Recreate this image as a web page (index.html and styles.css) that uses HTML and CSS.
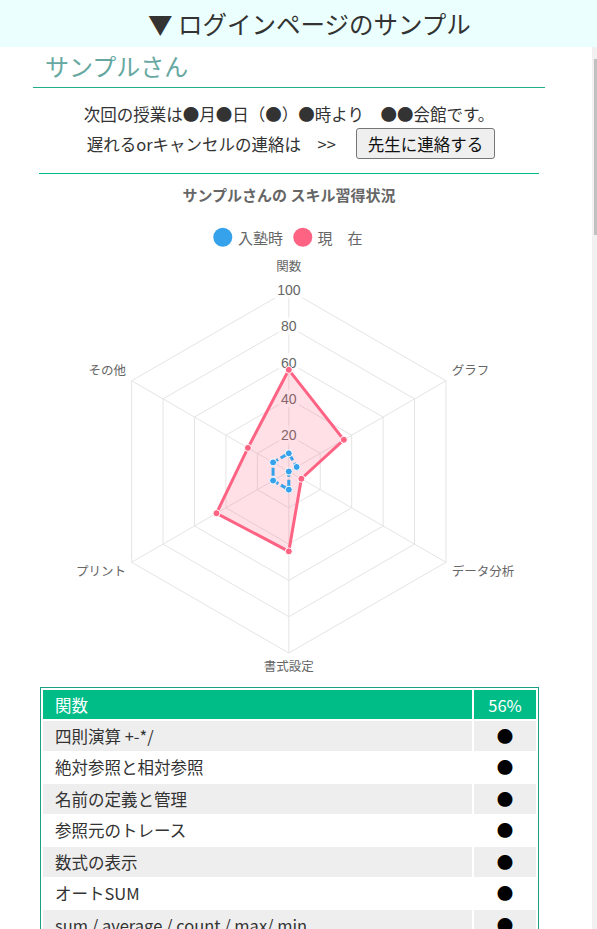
FILE: index.html
```html
<!DOCTYPE html>
<html lang="ja">
<head>
<meta charset="utf-8">
<title>ログインページのサンプル</title>
<link rel="stylesheet" href="styles.css">
</head>
<body>
<header class="topbar">▼ ログインページのサンプル</header>
<div class="page">
  <div class="content">
    <main class="main">
      <h2 class="user-name">サンプルさん</h2>
      <div class="info-line">次回の授業は●月●日（●）●時より　●●会館です。</div>
      <div class="info-row">
        <span>遅れるorキャンセルの連絡は　&gt;&gt;</span>
        <button class="contact-btn" type="button">先生に連絡する</button>
      </div>
      <hr class="sep">
      <svg class="chart" viewBox="29 174 520 510" width="520" height="510" xmlns="http://www.w3.org/2000/svg">
        <text x="289" y="194" class="c-title">サンプルさんの スキル習得状況</text>
        <circle cx="222.8" cy="237.3" r="9.5" fill="#36a2eb"/>
        <text x="238" y="237.3" class="c-legend">入塾時</text>
        <circle cx="302.8" cy="237.3" r="9.5" fill="#ff6384"/>
        <text x="317.5" y="237.3" class="c-legend">現　在</text>
        <g transform="translate(288.8 471.5)">
          <g class="grid">
            <polygon points="0,-36.3 31.44,-18.15 31.44,18.15 0,36.3 -31.44,18.15 -31.44,-18.15"/>
            <polygon points="0,-72.6 62.87,-36.3 62.87,36.3 0,72.6 -62.87,36.3 -62.87,-36.3"/>
            <polygon points="0,-108.9 94.31,-54.45 94.31,54.45 0,108.9 -94.31,54.45 -94.31,-54.45"/>
            <polygon points="0,-145.2 125.74,-72.6 125.74,72.6 0,145.2 -125.74,72.6 -125.74,-72.6"/>
            <polygon points="0,-181.5 157.18,-90.75 157.18,90.75 0,181.5 -157.18,90.75 -157.18,-90.75"/>
            <line x1="0" y1="0" x2="0" y2="-181.5"/>
            <line x1="0" y1="0" x2="157.18" y2="-90.75"/>
            <line x1="0" y1="0" x2="157.18" y2="90.75"/>
            <line x1="0" y1="0" x2="0" y2="181.5"/>
            <line x1="0" y1="0" x2="-157.18" y2="90.75"/>
            <line x1="0" y1="0" x2="-157.18" y2="-90.75"/>
          </g>
          <g class="tick-bg">
            <rect x="-14" y="-191" width="28" height="18"/>
            <rect x="-10" y="-154.7" width="20" height="18"/>
            <rect x="-10" y="-118.4" width="20" height="18"/>
            <rect x="-10" y="-82.1" width="20" height="18"/>
            <rect x="-10" y="-45.8" width="20" height="18"/>
          </g>
          <g class="ticks">
            <text x="0" y="-181.5">100</text>
            <text x="0" y="-145.2">80</text>
            <text x="0" y="-108.9">60</text>
            <text x="0" y="-72.6">40</text>
            <text x="0" y="-36.3">20</text>
          </g>
          <g class="plabels">
            <text x="0" y="-206.5" text-anchor="middle">関数</text>
            <text x="162.9" y="-102.5" text-anchor="start">グラフ</text>
            <text x="162.9" y="98.5" text-anchor="start">データ分析</text>
            <text x="0" y="193.5" text-anchor="middle">書式設定</text>
            <text x="-162.8" y="98.5" text-anchor="end">プリント</text>
            <text x="-162.8" y="-102.5" text-anchor="end">その他</text>
          </g>
          <polygon class="ds-now" points="0,-101.64 55.02,-31.76 12.57,7.26 0,79.86 -72.3,41.75 -40.87,-23.6"/>
          <polygon class="ds-start" points="0,-18.15 7.86,-4.54 0,0 0,18.15 -15.72,9.08 -15.72,-9.08"/>
          <g class="pt-now">
            <circle cx="0" cy="-101.64" r="3.5"/>
            <circle cx="55.02" cy="-31.76" r="3.5"/>
            <circle cx="12.57" cy="7.26" r="3.5"/>
            <circle cx="0" cy="79.86" r="3.5"/>
            <circle cx="-72.3" cy="41.75" r="3.5"/>
            <circle cx="-40.87" cy="-23.6" r="3.5"/>
          </g>
          <g class="pt-start">
            <circle cx="0" cy="-18.15" r="3.5"/>
            <circle cx="7.86" cy="-4.54" r="3.5"/>
            <circle cx="0" cy="0" r="3.5"/>
            <circle cx="0" cy="18.15" r="3.5"/>
            <circle cx="-15.72" cy="9.08" r="3.5"/>
            <circle cx="-15.72" cy="-9.08" r="3.5"/>
          </g>
        </g>
      </svg>
      <table class="skills">
        <thead>
          <tr><th class="c-name">関数</th><th class="c-val">56%</th></tr>
        </thead>
        <tbody>
          <tr><td class="c-name">四則演算 +-*/</td><td class="c-val">●</td></tr>
          <tr><td class="c-name">絶対参照と相対参照</td><td class="c-val">●</td></tr>
          <tr><td class="c-name">名前の定義と管理</td><td class="c-val">●</td></tr>
          <tr><td class="c-name">参照元のトレース</td><td class="c-val">●</td></tr>
          <tr><td class="c-name">数式の表示</td><td class="c-val">●</td></tr>
          <tr><td class="c-name">オートSUM</td><td class="c-val">●</td></tr>
          <tr><td class="c-name">sum / average / count / max/ min</td><td class="c-val">●</td></tr>
        </tbody>
      </table>
    </main>
  </div>
  <div class="scrollbar"><div class="thumb"></div></div>
</div>
</body>
</html>
```

FILE: styles.css
```css
html, body {
  margin: 0;
  padding: 0;
}
body {
  width: 597px;
  height: 929px;
  overflow: hidden;
  font-family: "Noto Sans CJK JP", "Noto Sans", sans-serif;
  color: #333;
  background: #fff;
}
.topbar {
  height: 47px;
  line-height: 47px;
  background: #eafffe;
  color: #333;
  font-size: 24.5px;
  text-align: center;
  padding-left: 22px;
  box-sizing: border-box;
}
.page {
  display: flex;
  height: 882px;
}
.content {
  flex: 1;
  overflow: hidden;
}
.scrollbar {
  width: 5px;
  background: #f1f1f1;
}
.thumb {
  margin-top: 12px;
  margin-left: 2px;
  height: 176px;
  background: #c1c1c1;
}
.main {
  width: 520px;
  margin-left: 29px;
}
.user-name {
  margin: 0 4px;
  padding: 0 0 2px 12px;
  font-size: 24px;
  font-weight: 400;
  line-height: 38px;
  color: #66a8a1;
  border-bottom: 1px solid #22ad8b;
}
.info-line {
  margin-top: 13px;
  height: 27px;
  line-height: 27px;
  font-size: 16.5px;
  text-align: center;
  white-space: nowrap;
}
.info-row {
  height: 31px;
  display: flex;
  justify-content: center;
  align-items: center;
  font-size: 16.5px;
  white-space: nowrap;
  padding-left: 4px;
}
.contact-btn {
  margin-left: 20px;
  height: 31px;
  padding: 0 11px;
  font-family: inherit;
  font-size: 16.5px;
  color: #111;
  background: #efefef;
  border: 1px solid #767676;
  border-radius: 3px;
}
.sep {
  margin: 14px 10px 0;
  border: 0;
  border-top: 1px solid #00bb88;
  height: 0;
}
.chart {
  display: block;
}
.c-title {
  font-size: 15px;
  font-weight: 700;
  fill: #666;
  text-anchor: middle;
  dominant-baseline: central;
}
.c-legend {
  font-size: 15px;
  fill: #666;
  dominant-baseline: central;
}
.grid polygon, .grid line {
  fill: none;
  stroke: #e4e4e4;
  stroke-width: 1;
}
.tick-bg rect {
  fill: #fff;
  fill-opacity: 0.75;
}
.ticks text {
  font-family: "Liberation Sans", Arial, sans-serif;
  font-size: 14px;
  fill: #666;
  text-anchor: middle;
  dominant-baseline: central;
}
.plabels text {
  font-size: 12.5px;
  fill: #666;
  dominant-baseline: central;
}
.ds-now {
  fill: rgba(255, 99, 132, 0.2);
  stroke: #ff6384;
  stroke-width: 3;
}
.ds-start {
  fill: none;
  stroke: #36a2eb;
  stroke-width: 3;
  stroke-dasharray: 8 3;
}
.pt-now circle {
  fill: #ff6384;
  stroke: #fff;
  stroke-width: 1;
}
.pt-start circle {
  fill: #36a2eb;
  stroke: #fff;
  stroke-width: 1;
}
.skills {
  margin: 3px 0 0 11px;
  width: 499px;
  border: 1px solid #1aa085;
  border-collapse: separate;
  border-spacing: 2px;
  font-size: 16.5px;
}
.skills th, .skills td {
  padding: 0 12px;
  font-weight: 400;
  box-sizing: border-box;
}
.skills th {
  height: 29px;
  background: #00bd88;
  color: #fff;
}
.skills td {
  height: 29.5px;
  color: #333;
}
.skills tbody tr:nth-child(odd) td {
  background: #eeeeee;
}
.skills tbody tr:nth-child(even) td {
  background: #fff;
}
.skills .c-name {
  text-align: left;
}
.skills .c-val {
  width: 62px;
  padding: 0;
  text-align: center;
}
.skills td.c-val {
  color: #000;
}
```
